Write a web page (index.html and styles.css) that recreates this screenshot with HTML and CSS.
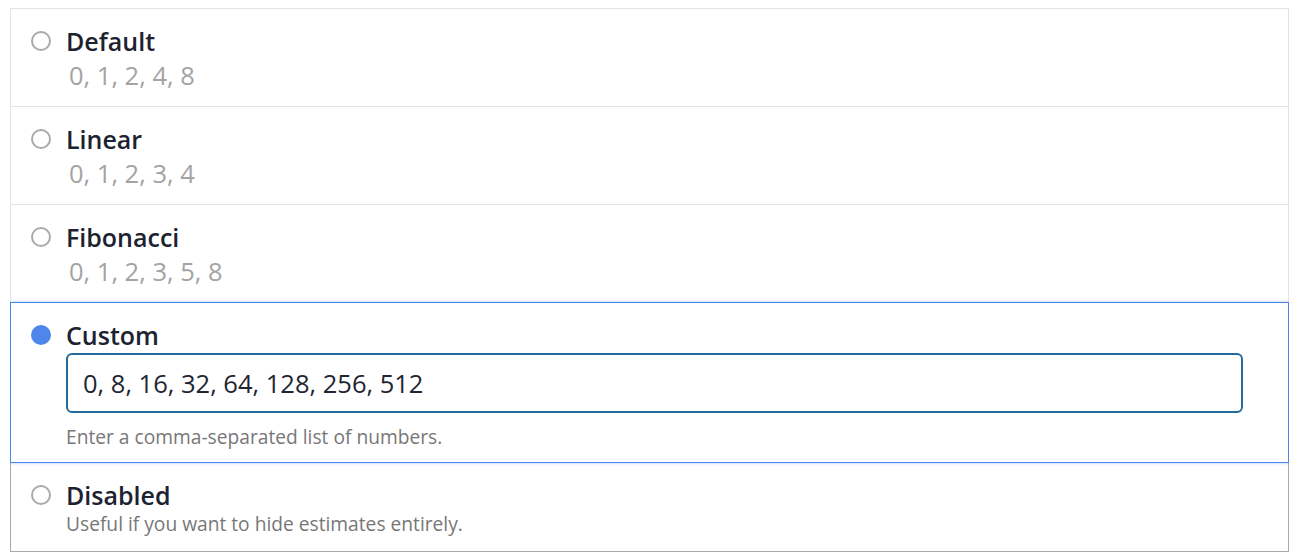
FILE: index.html
```html
<!DOCTYPE html>
<html>
<head>
    <title>Estimate scale</title>
    <link rel="stylesheet" href="styles.css">
</head>
<body>

<div class="options">
    <label class="option">
        <span class="radio"></span>
        <span class="body">
            <span class="title">Default</span>
            <span class="values">0, 1, 2, 4, 8</span>
        </span>
    </label>
    <label class="option">
        <span class="radio"></span>
        <span class="body">
            <span class="title">Linear</span>
            <span class="values">0, 1, 2, 3, 4</span>
        </span>
    </label>
    <label class="option">
        <span class="radio"></span>
        <span class="body">
            <span class="title">Fibonacci</span>
            <span class="values">0, 1, 2, 3, 5, 8</span>
        </span>
    </label>
    <div class="option selected">
        <span class="radio checked"></span>
        <div class="body">
            <span class="title">Custom</span>
            <input class="custom-input" type="text" value="0, 8, 16, 32, 64, 128, 256, 512">
            <span class="help">Enter a comma-separated list of numbers.</span>
        </div>
    </div>
    <label class="option last">
        <span class="radio"></span>
        <span class="body">
            <span class="title">Disabled</span>
            <span class="help tight">Useful if you want to hide estimates entirely.</span>
        </span>
    </label>
</div>

</body>
</html>
```

FILE: styles.css
```css
body {
    margin: 8px 9px 0 10px;
    font-family: "Open Sans", "Noto Sans", sans-serif;
    background-color: #fff;
}

.options {
    display: flex;
    flex-direction: column;
}

.option {
    display: flex;
    align-items: flex-start;
    padding: 16px 45px 15px 20px;
    border: 1px solid #e1e4e7;
    margin-top: -1px;
    background-color: #fff;
    cursor: pointer;
}

.option:first-child {
    margin-top: 0;
}

.option.selected {
    position: relative;
    z-index: 1;
    border-color: #4a86e8;
    box-shadow: 0 0 3px rgba(74, 134, 232, 0.45);
    padding-bottom: 12px;
}

.option.last {
    border-color: #a9a9a9;
    border-top-color: #4a86e8;
    padding-bottom: 14px;
}

.radio {
    flex: none;
    box-sizing: border-box;
    width: 20px;
    height: 20px;
    margin-top: 6px;
    border: 2.5px solid #aaa;
    border-radius: 50%;
}

.radio.checked {
    border: none;
    background-color: #4f86ec;
}

.body {
    display: flex;
    flex-direction: column;
    align-items: flex-start;
    flex: 1;
    margin-left: 15px;
}

.title {
    font-size: 25px;
    font-weight: 600;
    line-height: 32px;
    color: #1c2230;
}

.values {
    font-size: 25.5px;
    line-height: 32px;
    margin-top: 2px;
    padding-left: 3px;
    color: #a3a3a3;
}

.custom-input {
    box-sizing: border-box;
    width: 100%;
    height: 60px;
    margin-top: 2px;
    padding: 0 15px;
    border: 2px solid #256a9c;
    border-radius: 6px;
    font-family: "Open Sans", "Noto Sans", sans-serif;
    font-size: 25.5px;
    color: #1f2532;
    outline: none;
    background-color: #fff;
}

.help {
    font-size: 19.2px;
    line-height: 26px;
    margin-top: 11px;
    color: #777;
}

.help.tight {
    margin-top: 0;
}
```
